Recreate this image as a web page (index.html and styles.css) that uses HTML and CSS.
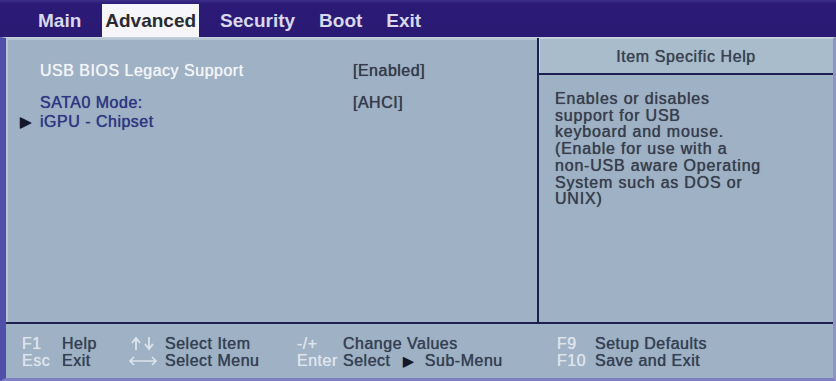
FILE: index.html
```html
<!DOCTYPE html>
<html>
<head>
<meta charset="utf-8">
<link rel="stylesheet" href="styles.css">
</head>
<body>
<div class="bios">
  <div class="menubar">
    <span class="tab">Main</span>
    <span class="tab active">Advanced</span>
    <span class="tab">Security</span>
    <span class="tab">Boot</span>
    <span class="tab">Exit</span>
  </div>
  <div class="frame">
    <div class="main">
      <div class="settings">
        <div class="row">
          <span class="label sel">USB BIOS Legacy Support</span>
          <span class="value">[Enabled]</span>
        </div>
        <div class="row gap">
          <span class="label blue">SATA0 Mode:</span>
          <span class="value">[AHCI]</span>
        </div>
        <div class="row">
          <span class="label blue sub"><span class="arrow">&#9654;</span>iGPU - Chipset</span>
          <span class="value"></span>
        </div>
      </div>
      <div class="help">
        <div class="help-title">Item Specific Help</div>
        <div class="help-text">Enables or disables<br>support for USB<br>keyboard and mouse.<br>(Enable for use with a<br>non-USB aware Operating<br>System such as DOS or<br>UNIX)</div>
      </div>
    </div>
    <div class="footer">
      <span class="key">F1</span><span class="desc">Help</span>
      <span class="key icon"><svg width="30" height="17" viewBox="0 0 30 17"><path d="M8 15V4M4 8l4-5 4 5M21 2v11M17 9l4 5 4-5" fill="none" stroke="#dde4ec" stroke-width="1.8"/></svg></span><span class="desc">Select Item</span>
      <span class="key">-/+</span><span class="desc">Change Values</span>
      <span class="key">F9</span><span class="desc">Setup Defaults</span>
      <span class="key">Esc</span><span class="desc">Exit</span>
      <span class="key icon"><svg width="30" height="17" viewBox="0 0 30 17"><path d="M2 9h26M6 5l-4 4 4 4M24 5l4 4-4 4" fill="none" stroke="#dde4ec" stroke-width="1.6"/></svg></span><span class="desc">Select Menu</span>
      <span class="key">Enter</span><span class="desc">Select <span class="tri">&#9654;</span> Sub-Menu</span>
      <span class="key">F10</span><span class="desc">Save and Exit</span>
    </div>
  </div>
</div>
</body>
</html>
```

FILE: styles.css
```css
html, body {
  margin: 0;
  padding: 0;
  background: #9fb1c4;
}
body {
  width: 836px;
  height: 381px;
  overflow: hidden;
  font-family: "Liberation Sans", Arial, sans-serif;
}
.bios {
  display: flex;
  flex-direction: column;
  width: 836px;
  height: 381px;
}
.menubar {
  height: 37px;
  box-sizing: border-box;
  padding: 4px 0 0 35px;
  display: flex;
  gap: 18px;
  background: linear-gradient(#3d2e8a 0, #2b1b76 4px, #2a1a74 100%);
}
.tab {
  font-weight: bold;
  font-size: 19px;
  line-height: 33px;
  padding: 0 3px;
  color: #d8d8ee;
}
.tab.active {
  background: #f6f6fa;
  color: #2a2a33;
}
.frame {
  flex: 1;
  display: flex;
  flex-direction: column;
  border-left: 6px solid #4f4ea8;
  border-right: 3px solid #8f93c8;
  border-bottom: 3px solid #7d7fc2;
  border-top: 1px solid #c4d0dc;
}
.main {
  display: flex;
  height: 284px;
  border-bottom: 2px solid #1e2150;
}
.settings {
  width: 531px;
  padding: 23px 0 0 34px;
  box-sizing: border-box;
  background: #9fb1c4;
  box-shadow: inset 2px 2px 0 #b8c6d4;
}
.row {
  display: grid;
  grid-template-columns: 313px auto;
  font-size: 16px;
  line-height: 19px;
  letter-spacing: 0.5px;
  text-shadow: 0 0 0.7px;
}
.row.gap {
  margin-top: 13px;
}
.label.sel {
  color: #f2f5f8;
}
.label.blue {
  color: #2f3682;
}
.label.sub {
  position: relative;
}
.arrow {
  position: absolute;
  left: -20px;
  top: 0;
  font-size: 15px;
  color: #15172a;
  letter-spacing: 0;
}
.value {
  color: #353b4c;
}
.help {
  flex: 1;
  border-left: 2px solid #1e2150;
  display: flex;
  flex-direction: column;
}
.help-title {
  height: 37px;
  box-sizing: border-box;
  border-bottom: 2px solid #1e2150;
  background: #a9bccc;
  box-shadow: inset 1px 1px 0 #c4d2de;
  text-align: center;
  font-size: 16px;
  line-height: 38px;
  color: #3b4252;
  letter-spacing: 0.6px;
  text-shadow: 0 0 0.7px;
}
.help-text {
  padding: 16px 0 0 16px;
  font-size: 16px;
  line-height: 16.7px;
  letter-spacing: 0.8px;
  color: #383e4e;
  text-shadow: 0 0 0.7px;
}
.footer {
  flex: 1;
  display: grid;
  grid-template-columns: 40px 66px 37px 132px 46px 214px 38px auto;
  grid-auto-rows: 17px;
  padding: 11px 0 0 16px;
  font-size: 16px;
  line-height: 17px;
  letter-spacing: 0.5px;
  background: #9fb1c4;
  text-shadow: 0 0 0.7px;
}
.key {
  color: #dde4ec;
}
.key.icon {
  display: flex;
  align-items: center;
}
.key.icon svg {
  display: block;
}
.desc {
  color: #364055;
}
.tri {
  font-size: 14px;
  color: #15172a;
  margin: 0 5px 0 8px;
}
```
